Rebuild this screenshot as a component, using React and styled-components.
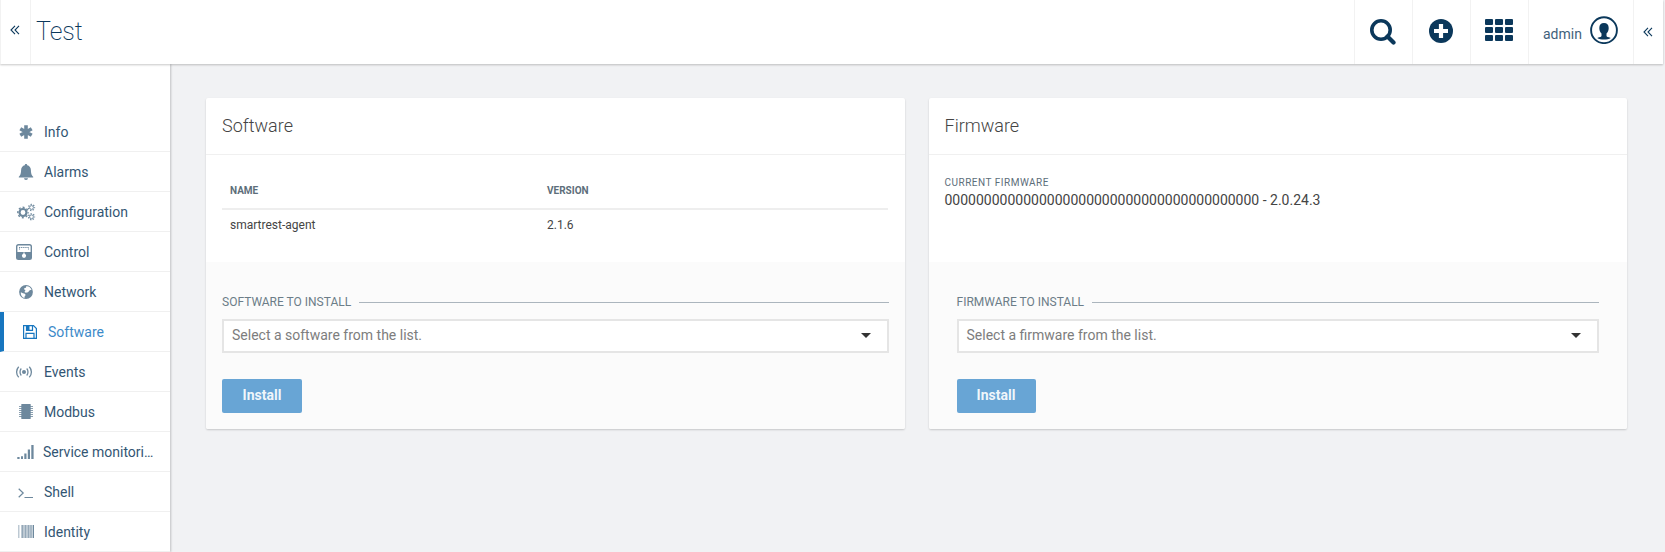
import React from "react";
import styled, { createGlobalStyle, css } from "styled-components";

const GlobalStyle = createGlobalStyle`
  * { box-sizing: border-box; }
  html, body { margin: 0; padding: 0; }
  body {
    background: #f1f2f4;
    font-family: Roboto, "Liberation Sans", sans-serif;
    font-size: 14px;
    color: #444;
    overflow: hidden;
  }
`;

const Page = styled.div`
  display: flex;
  flex-direction: column;
  height: 552px;
`;

const Header = styled.header`
  position: relative;
  z-index: 2;
  display: flex;
  flex: none;
  height: 64px;
  margin-right: 2px;
  background: #fff;
  color: #0b385b;
  box-shadow: 0 1px 2px rgba(0, 0, 0, 0.22);
`;

const HeaderCell = styled.div`
  display: flex;
  justify-content: center;
  width: ${(p) => p.$width}px;
  padding: ${(p) => p.$top}px 1px 0 0;
  border-left: 1px solid #f2f2f2;
`;

const Title = styled.h1`
  flex: 1;
  margin: 0;
  padding: 16px 0 0 5px;
  border-left: 1px solid #f2f2f2;
  font-size: 25px;
  line-height: 32px;
  font-weight: 200;
  letter-spacing: -0.1px;
`;

const User = styled.div`
  display: flex;
  width: 105px;
  padding: 16px 0 0 14px;
  gap: 8px;
  border-left: 1px solid #f2f2f2;
`;

const UserName = styled.span`
  padding-top: 10px;
  width: 39px;
  line-height: 16px;
  opacity: 0.8;
`;

const Body = styled.div`
  display: flex;
  flex: 1;
  min-height: 0;
`;

const Sidebar = styled.nav`
  width: 170px;
  flex: none;
  padding-top: 48px;
  background: #fff;
  box-shadow: 1px 0 2px rgba(0, 0, 0, 0.2);
`;

const NavItem = styled.div`
  display: flex;
  height: 40px;
  padding: 0 14px;
  gap: ${(p) => (p.$tight ? 5 : 6)}px;
  border-bottom: 1px solid #f0f0f0;
  color: #0b385b;
  ${(p) =>
    p.$active &&
    css`
      border-left: 4px solid #1776bf;
      color: #1776bf;
    `}
`;

const NavIcon = styled.svg`
  flex: none;
  width: 24px;
  height: 24px;
  margin-top: 8px;
  color: ${(p) => (p.$active ? "#1776bf" : "#6d889d")};
`;

const NavLabel = styled.span`
  margin-top: 12px;
  white-space: nowrap;
  line-height: 16px;
  opacity: 0.85;
`;

const Main = styled.main`
  display: grid;
  grid-template-columns: 698.5px 698.5px;
  align-items: start;
  gap: 24px;
  padding: 34px 0 0 36px;
`;

const Card = styled.section`
  height: 331px;
  border-radius: 2px;
  background: #fff;
  box-shadow: 0 1px 2px rgba(0, 0, 0, 0.18);
`;

const CardTitle = styled.h2`
  height: 57px;
  margin: 0;
  padding: 16px 16px 0;
  border-bottom: 1px solid #f0f0f0;
  font-size: 18px;
  line-height: 24px;
  font-weight: 300;
`;

const CardBody = styled.div`
  height: 107px;
  padding: 20px 17px 0 16px;
`;

const Table = styled.div`
  display: grid;
  grid-template-columns: 317px 1fr;
`;

const Th = styled.div`
  height: 35px;
  padding: 9px 8px 0;
  border-bottom: 2px solid #eeeeee;
  font-size: 10px;
  line-height: 14px;
  font-weight: 700;
  color: #5d6e7a;
`;

const Td = styled.div`
  padding: 7px 8px 0;
  font-size: 12px;
  line-height: 16px;
`;

const Caption = styled.div`
  padding-top: 2px;
  font-size: 10px;
  line-height: 12px;
  letter-spacing: 0.5px;
  color: #5d6e7a;
`;

const Value = styled.div`
  padding-top: 3px;
  line-height: 16px;
`;

const CardFooter = styled.div`
  height: 167px;
  padding: 31px ${(p) => p.$inset}px 0;
  border-radius: 0 0 2px 2px;
  background: #fbfbfb;
`;

const Legend = styled.div`
  display: flex;
  align-items: center;
  gap: 8px;
  height: 18px;
  font-size: 12px;
  line-height: 18px;
  color: #6c7d88;
  &::after {
    content: "";
    flex: 1;
    height: 1px;
    background: #abb5bd;
  }
`;

const Select = styled.div`
  display: flex;
  align-items: center;
  justify-content: space-between;
  height: 34px;
  margin-top: 8px;
  padding: 0 16px 2px 8px;
  border: 2px solid #e5e5e5;
  background: #fff;
  color: #7d7d7d;
`;

const Caret = styled.span`
  border: 5px solid transparent;
  border-top-color: #333;
  border-bottom: 0;
`;

const Button = styled.button`
  display: block;
  width: ${(p) => p.$width}px;
  height: 34px;
  margin-top: 26px;
  padding: 0 0 2px;
  border: 0;
  border-radius: 2px;
  background: #68a5d5;
  color: rgba(255, 255, 255, 0.92);
  font: 700 14px Roboto, "Liberation Sans", sans-serif;
`;

const DoubleAngle = () => (
  <svg width="10" height="10" viewBox="0 0 10 10" fill="none" stroke="currentColor" strokeWidth="1.1">
    <path d="M5 .8 1 5l4 4.2M9 .8 5 5l4 4.2" />
  </svg>
);

const Gear = ({ cx, cy, r, w, teeth }) => {
  const outer = r + w / 2 + 0.6;
  const step = (2 * Math.PI * outer) / teeth;
  return (
    <g fill="none" stroke="currentColor">
      <circle cx={cx} cy={cy} r={r} strokeWidth={w} />
      <circle cx={cx} cy={cy} r={outer} strokeWidth="1.4" strokeDasharray={`${step / 2} ${step / 2}`} strokeDashoffset={step / 4} />
    </g>
  );
};

const icons = {
  info: <path d="M12 5.2v13.600M6.300 8.700l11.400 6.600M17.700 8.700 6.300 15.300" stroke="currentColor" strokeWidth="3.600" />,
  alarms: (
    <path
      fill="currentColor"
      d="M12 4c.8 0 1.2.5 1.2 1.2 2.3.5 3.6 2.3 3.7 4.8.1 4.100.9 5.400 2.300 6.700V17.500H4.800V16.700C6.200 15.400 7 14.100 7.100 10c.1-2.500 1.400-4.300 3.700-4.800C10.800 4.500 11.200 4 12 4zM10 18.200h4a2 1.800 0 0 1-4 0z"
    />
  ),
  configuration: (
    <>
      <Gear cx={9} cy={12.500} r={3.500} w={2.200} teeth={8} />
      <Gear cx={17.500} cy={7.500} r={1.900} w={0.900} teeth={7} />
      <Gear cx={17.500} cy={16.800} r={1.900} w={0.900} teeth={7} />
    </>
  ),
  control: (
    <>
      <rect x="2.700" y="4.700" width="14.600" height="14.600" rx="1.800" fill="none" stroke="currentColor" strokeWidth="1.400" />
      <path fill="currentColor" d="M3 12h14v7H3z" />
      <path d="M5 7.500h10" stroke="currentColor" strokeWidth="1" strokeDasharray="1.300 .8" />
      <path d="M5 9h1M14 9h1" stroke="currentColor" strokeWidth="1" />
      <path d="M10 12.500v2" stroke="#fff" strokeWidth="1.200" />
      <circle cx="10" cy="15.800" r="2.100" fill="#fff" />
    </>
  ),
  network: (
    <>
      <circle cx="12" cy="12" r="6.900" fill="currentColor" />
      <path
        fill="#fff"
        d="M12.200 6.200c2.600-.3 4.600 1.400 5.400 3.600l-1.900.4-1.700 2-2.200.6-1.300-.9 1-1.800-1.400-.6.3-1.500 1.600-.3zM6.800 12.200l2.200 1 1.800.6.9 1.200-1 1.200-.3 1.700c-2.300-.6-3.900-2.700-3.600-5.700z"
      />
    </>
  ),
  software: (
    <g fill="none" stroke="currentColor" strokeWidth="1.200">
      <path d="M5.600 5.600h9.900l2.900 2.900v9.900H5.600z" />
      <path d="M8 18v-4.600h8V18M8.500 6v4.300h6V6" />
      <path d="M8 6h3.500v4H8z" fill="currentColor" stroke="none" />
    </g>
  ),
  events: (
    <g fill="none" stroke="currentColor" strokeWidth="1.300">
      <circle cx="10" cy="12" r="2" fill="currentColor" stroke="none" />
      <path d="M7.300 8.500c-1.700 1.800-1.700 5.200 0 7M12.700 8.500c1.700 1.800 1.700 5.200 0 7M4.700 6.700c-2.800 3-2.800 7.600 0 10.600M15.300 6.700c2.800 3 2.800 7.600 0 10.600" />
    </g>
  ),
  modbus: (
    <>
      <rect x="7.300" y="4" width="9.400" height="15" rx=".5" fill="currentColor" />
      <path d="M5 6.500h14M5 8.500h14M5 10.500h14M5 12.500h14M5 14.500h14M5 16.500h14" stroke="currentColor" strokeWidth=".8" />
    </>
  ),
  service: (
    <path fill="currentColor" d="M3.300 17h2.300v2H3.300zM7 16.200h2V19H7zM10.300 13.500h2.200V19h-2.200zM13.800 9.500H16V19h-2.200zM17.300 5h2.300v14h-2.300z" />
  ),
  shell: <path d="M4.700 8.700l4.500 4.300-4.500 4.300M10.500 17.500h8.500" fill="none" stroke="currentColor" strokeWidth="1.200" />,
  identity: (
    <g fill="currentColor">
      <path opacity=".45" d="M4 5h1.500v13H4zM7 5h11.500v13H7z" />
      <path opacity=".5" d="M8 5h1v13H8zM11 5h1v13h-1zM14 5h1v13h-1zM16.500 5h1v13h-1z" />
      <path d="M18.800 5H20v13h-1.200z" />
    </g>
  ),
};

const items = [
  ["info", "Info"],
  ["alarms", "Alarms"],
  ["configuration", "Configuration"],
  ["control", "Control"],
  ["network", "Network"],
  ["software", "Software"],
  ["events", "Events"],
  ["modbus", "Modbus"],
  ["service", "Service monitori…"],
  ["shell", "Shell"],
  ["identity", "Identity"],
];

const SearchIcon = () => (
  <svg width="26" height="26" viewBox="0 0 26 26" fill="none" stroke="currentColor">
    <circle cx="11" cy="11" r="9.200" strokeWidth="3.600" />
    <path d="M17.500 17.500l6 6" strokeWidth="4.200" strokeLinecap="round" />
  </svg>
);

const PlusIcon = () => (
  <svg width="24" height="24" viewBox="0 0 24 24">
    <circle cx="12" cy="12" r="12" fill="currentColor" />
    <path d="M12 5v14M5 12h14" stroke="#fff" strokeWidth="4.200" />
  </svg>
);

const GridIcon = () => (
  <svg width="28" height="22" viewBox="0 0 28 22" fill="currentColor">
    {[0, 8, 16].map((y) =>
      [0, 10, 20].map((x) => <rect key={`${x}-${y}`} x={x} y={y} width="8" height="6" rx="1" />)
    )}
  </svg>
);

const UserIcon = () => (
  <svg width="28" height="28" viewBox="0 0 28 28">
    <circle cx="14" cy="14.200" r="12.900" fill="none" stroke="currentColor" strokeWidth="1.900" />
    <path
      fill="currentColor"
      d="M14 7c3 0 4.700 1.900 4.700 4.900 0 2.400-.9 4.300-2.200 5.600v2.200c0 1 1.500 1.300 4.300 2.200C19 23.200 16.700 23.600 14 23.600S9 23.200 7.200 21.900c2.800-.9 4.300-1.200 4.300-2.200v-2.200c-1.300-1.300-2.200-3.200-2.200-5.600 0-3 1.700-4.900 4.700-4.900z"
    />
  </svg>
);

const InstallForm = ({ legend, placeholder, inset, buttonWidth }) => (
  <CardFooter $inset={inset}>
    <Legend>{legend}</Legend>
    <Select>
      {placeholder}
      <Caret />
    </Select>
    <Button $width={buttonWidth}>Install</Button>
  </CardFooter>
);

export default function App() {
  return (
    <Page>
      <GlobalStyle />
      <Header>
        <HeaderCell $width={30} $top={25}><DoubleAngle /></HeaderCell>
        <Title>Test</Title>
        <HeaderCell $width={58} $top={19}><SearchIcon /></HeaderCell>
        <HeaderCell $width={58} $top={19}><PlusIcon /></HeaderCell>
        <HeaderCell $width={58} $top={19}><GridIcon /></HeaderCell>
        <User>
          <UserName>admin</UserName>
          <UserIcon />
        </User>
        <HeaderCell $width={30} $top={27}><DoubleAngle /></HeaderCell>
      </Header>
      <Body>
        <Sidebar>
          {items.map(([id, label]) => {
            const active = id === "software";
            return (
              <NavItem key={id} $active={active} $tight={id === "service"}>
                <NavIcon viewBox="0 0 24 24" $active={active}>{icons[id]}</NavIcon>
                <NavLabel>{label}</NavLabel>
              </NavItem>
            );
          })}
        </Sidebar>
        <Main>
          <Card>
            <CardTitle>Software</CardTitle>
            <CardBody>
              <Table>
                <Th>NAME</Th>
                <Th>VERSION</Th>
                <Td>smartrest-agent</Td>
                <Td>2.1.6</Td>
              </Table>
            </CardBody>
            <InstallForm legend="SOFTWARE TO INSTALL" placeholder="Select a software from the list." inset={16} buttonWidth={80} />
          </Card>
          <Card>
            <CardTitle>Firmware</CardTitle>
            <CardBody>
              <Caption>CURRENT FIRMWARE</Caption>
              <Value>{"0".repeat(40)} - 2.0.24.3</Value>
            </CardBody>
            <InstallForm legend="FIRMWARE TO INSTALL" placeholder="Select a firmware from the list." inset={28} buttonWidth={79} />
          </Card>
        </Main>
      </Body>
    </Page>
  );
}
